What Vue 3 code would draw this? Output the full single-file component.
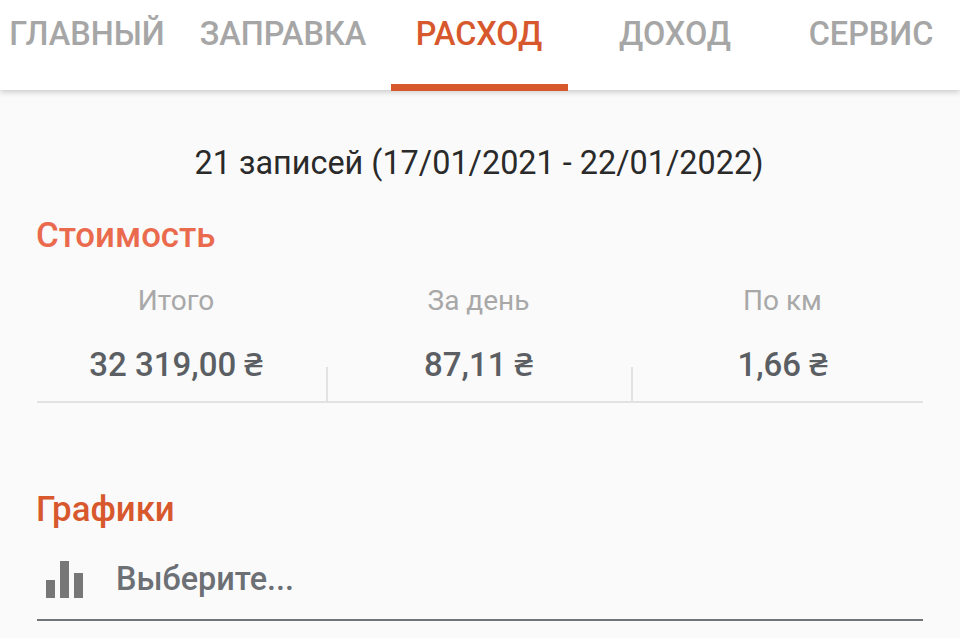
<template>
  <div class="screen">
    <nav class="tabs">
      <div
        v-for="tab in tabs"
        :key="tab.label"
        class="tab"
        :class="{ 'tab--active': tab.active }"
      >
        {{ tab.label }}
      </div>
    </nav>

    <main class="content">
      <p class="period">21 записей (17/01/2021 - 22/01/2022)</p>

      <h2 class="heading heading--cost">Стоимость</h2>
      <div class="stats">
        <div v-for="stat in stats" :key="stat.label" class="stat">
          <div class="stat-label">{{ stat.label }}</div>
          <div class="stat-value">{{ stat.value }}</div>
        </div>
      </div>

      <h2 class="heading heading--charts">Графики</h2>
      <div class="select">
        <svg class="select-icon" width="38" height="37" viewBox="0 0 38 37">
          <rect x="0" y="19" width="9" height="18" />
          <rect x="14" y="0" width="9" height="37" />
          <rect x="28" y="12" width="9" height="25" />
        </svg>
        <span class="select-text">Выберите...</span>
      </div>
    </main>
  </div>
</template>

<script setup>
const tabs = [
  { label: 'ГЛАВНЫЙ' },
  { label: 'ЗАПРАВКА' },
  { label: 'РАСХОД', active: true },
  { label: 'ДОХОД' },
  { label: 'СЕРВИС' }
];

const stats = [
  { label: 'Итого', value: '32 319,00 ₴' },
  { label: 'За день', value: '87,11 ₴' },
  { label: 'По км', value: '1,66 ₴' }
];
</script>

<style>
body {
  margin: 0;
  background: #fafafa;
}
</style>

<style scoped>
.screen {
  width: 960px;
  height: 638px;
  overflow: hidden;
  background: #fafafa;
  font-family: Roboto, "Noto Sans", sans-serif;
}

.tabs {
  display: flex;
  justify-content: center;
  gap: 19px;
  height: 90px;
  padding-right: 2px;
  background: #fff;
  box-shadow: 0 2px 6px rgba(0, 0, 0, 0.2);
  position: relative;
}

.tab {
  flex: none;
  width: 177px;
  box-sizing: border-box;
  height: 91px;
  padding-top: 14px;
  line-height: 40px;
  text-align: center;
  white-space: nowrap;
  font-size: 32.4px;
  font-weight: 500;
  color: #a6a6a6;
}

.tab--active {
  color: #d8582d;
  border-bottom: 7px solid #d8582d;
}

.content {
  padding: 0 37px;
}

.period {
  margin: 0;
  padding: 54px 2px 0 0;
  line-height: 38px;
  text-align: center;
  font-size: 32.4px;
  color: #2a2a2a;
}

.heading {
  margin: 0 0 0 -1px;
  font-size: 34.8px;
  line-height: 40px;
  font-weight: 500;
}

.heading--cost {
  margin-top: 33px;
  color: #ea6a4e;
}

.heading--charts {
  margin-top: 86px;
  color: #d8582d;
}

.stats {
  display: grid;
  grid-template-columns: 290px 305px 291px;
  height: 148px;
  box-sizing: border-box;
  border-bottom: 2px solid #e2e2e2;
}

.stat {
  position: relative;
  text-align: center;
}

.stat:first-child {
  padding-right: 12px;
}

.stat:nth-child(2) {
  padding-right: 2px;
}

.stat:last-child {
  padding-left: 10px;
}

.stat + .stat::before {
  content: '';
  position: absolute;
  left: -1px;
  bottom: 0;
  width: 2px;
  height: 34px;
  background: #e2e2e2;
}

.stat-label {
  margin-top: 29px;
  line-height: 34px;
  font-size: 28px;
  color: #a8a8a8;
}

.stat-value {
  margin-top: 28px;
  line-height: 38px;
  font-size: 33px;
  font-weight: 500;
  color: #5b5f64;
}

.select {
  display: flex;
  align-items: center;
  height: 92px;
  padding: 10px 0 0 9px;
  box-sizing: border-box;
  border-bottom: 2px solid #70757a;
}

.select-icon {
  flex: none;
  fill: #777;
  margin-right: 32px;
}

.select-text {
  font-size: 32.4px;
  font-weight: 500;
  color: #6c7075;
}
</style>
